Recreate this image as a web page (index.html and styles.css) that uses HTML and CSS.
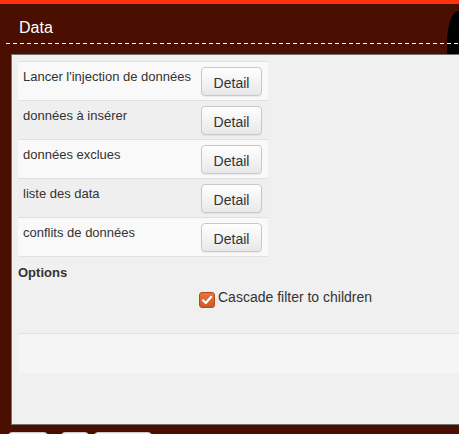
FILE: index.html
```html
<!DOCTYPE html>
<html>
<head>
<meta charset="utf-8">
<link rel="stylesheet" href="styles.css">
</head>
<body>
<div class="topbar"></div>
<div class="corner"></div>
<header class="header">
  <h1 class="title">Data</h1>
</header>
<div class="dashline"></div>
<main class="panel">
  <div class="table">
    <div class="row odd"><span class="label">Lancer l'injection de données</span><button class="btn">Detail</button></div>
    <div class="row even"><span class="label">données à insérer</span><button class="btn">Detail</button></div>
    <div class="row odd"><span class="label">données exclues</span><button class="btn">Detail</button></div>
    <div class="row even"><span class="label">liste des data</span><button class="btn">Detail</button></div>
    <div class="row odd"><span class="label">conflits de données</span><button class="btn">Detail</button></div>
  </div>
  <h2 class="options">Options</h2>
  <label class="check-row">
    <span class="checkbox"><svg width="12" height="12" viewBox="0 0 12 12"><path d="M2 6.2 L4.8 9 L10.2 2.8" fill="none" stroke="#fff" stroke-width="2.2" stroke-linecap="round" stroke-linejoin="round"/></svg></span>
    <span class="check-label">Cascade filter to children</span>
  </label>
  <div class="box"></div>
</main>
<footer class="footer">
  <span class="fbtn w40"></span>
  <span class="fbtn w28"></span>
  <span class="fbtn w58"></span>
</footer>
</body>
</html>
```
FILE: styles.css
```css
html, body {
  margin: 0;
  padding: 0;
  overflow: hidden;
  height: 100%;
}
body {
  background: #4a0f00;
  font-family: "Liberation Sans", Arial, sans-serif;
  color: #333;
}
.topbar {
  height: 4px;
  background: #ff330a;
}
.corner {
  position: absolute;
  z-index: -1;
  left: 447px;
  top: 11px;
  width: 20px;
  height: 43px;
  background: #000;
  border-top-left-radius: 11px 33px;
}
.header {
  height: 39px;
  padding: 14px 0 0 19px;
  box-sizing: border-box;
}
.title {
  margin: 0;
  font-size: 16px;
  line-height: 20px;
  font-weight: normal;
  color: #fff;
}
.dashline {
  margin-left: 6px;
  height: 1px;
  background: repeating-linear-gradient(to right, #fff 0 4px, transparent 4px 7px);
}
.panel {
  margin: 10px 0 0 11px;
  height: 371px;
  box-sizing: border-box;
  border: 1px solid #737373;
  border-right: none;
  background: #f0f0f0;
  padding: 6px 0 0 6px;
}
.table {
  width: 250px;
  border-bottom: 1px solid #e2e2e2;
}
.row {
  display: flex;
  justify-content: space-between;
  align-items: flex-start;
  height: 38px;
  border-top: 1px solid #e0e0e0;
  padding: 0 6px 0 5px;
}
.row.odd { background: #f9f9f9; }
.row.even { background: #efefef; }
.label {
  font-size: 13px;
  line-height: 18px;
  padding-top: 6px;
}
.btn {
  margin-top: 5px;
  width: 61px;
  height: 29px;
  box-sizing: border-box;
  padding: 5px 0 2px;
  font-family: "Liberation Sans", Arial, sans-serif;
  font-size: 14px;
  line-height: 20px;
  color: #333;
  border: 1px solid #c8c8c8;
  border-radius: 4px;
  background: linear-gradient(#ffffff, #e8e8e8);
  box-shadow: 0 1px 1px rgba(0,0,0,0.06);
}
.options {
  margin: 8px 0 0 0;
  font-size: 13px;
  line-height: 15px;
  font-weight: bold;
}
.check-row {
  display: flex;
  align-items: flex-start;
  margin: 9px 0 0 181px;
  gap: 3px;
}
.checkbox {
  margin-top: 3px;
  width: 16px;
  height: 16px;
  box-sizing: border-box;
  border-radius: 3px;
  background: linear-gradient(#e8743c, #cf5a23);
  border: 1px solid #b44a1b;
  display: flex;
  align-items: center;
  justify-content: center;
}
.check-label {
  font-size: 14px;
  line-height: 16px;
}
.box {
  margin-top: 25px;
  height: 40px;
  box-sizing: border-box;
  border-top: 1px solid #e2e2e2;
  background: #f5f5f5;
}
.footer {
  display: flex;
  margin: 7px 0 0 8px;
}
.fbtn {
  display: block;
  height: 20px;
  background: #f4f4f4;
  border: 1px solid #ccc;
  border-radius: 4px;
  box-sizing: border-box;
}
.w40 { width: 40px; }
.w28 { width: 28px; margin-left: 13px; }
.w58 { width: 58px; margin-left: 5px; }
```
